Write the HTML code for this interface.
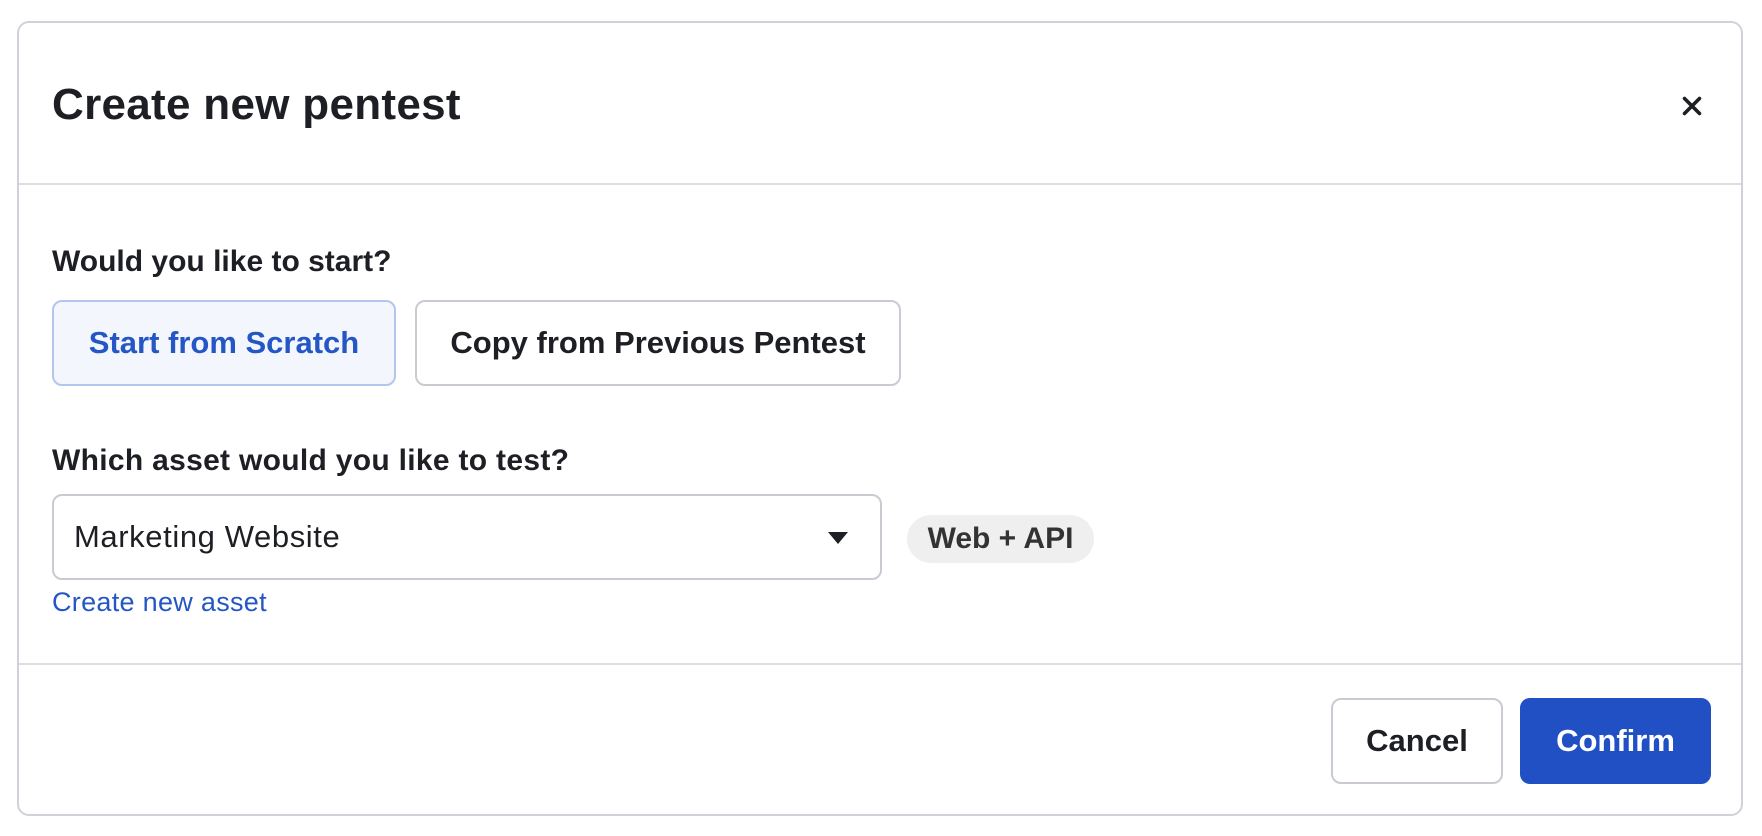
<!DOCTYPE html>
<html><head><style>
*{box-sizing:border-box;margin:0;padding:0}
body{width:1762px;height:836px;background:#fff;font-family:"Liberation Sans",sans-serif;position:relative;overflow:hidden;color:#1d1f24}
.modal{position:absolute;left:17px;top:21px;width:1726px;height:795px;border:2px solid #cfd2d8;border-radius:12px;background:#fff}
.abs{position:absolute}
h1{position:absolute;left:33px;top:57px;font-size:44px;font-weight:bold;line-height:50px;letter-spacing:0.3px}
.div{position:absolute;left:0;right:0;height:2px;background:#dcdee2}
.lbl{position:absolute;left:33px;font-size:30px;font-weight:bold;line-height:34px}
.btn{position:absolute;border-radius:10px;border:2px solid #c8cbd1;display:flex;align-items:center;justify-content:center;font-size:31px;font-weight:bold;background:#fff}
</style></head><body>
<div class="modal">
<h1>Create new pentest</h1>
<svg class="abs" style="left:1663px;top:73px" width="20" height="20" viewBox="0 0 20 20"><path d="M2.5 2.5L17.5 17.5M17.5 2.5L2.5 17.5" stroke="#1d1f24" stroke-width="3.6" stroke-linecap="round"/></svg>
<div class="div" style="top:160px"></div>
<div class="lbl" style="top:222px">Would you like to start?</div>
<div class="btn" style="left:33px;top:277px;width:344px;height:86px;background:#f3f6fd;border-color:#b3c6ef;color:#2457c5">Start from Scratch</div>
<div class="btn" style="left:396px;top:277px;width:486px;height:86px">Copy from Previous Pentest</div>
<div class="lbl" style="top:421px;letter-spacing:0.3px">Which asset would you like to test?</div>
<div class="btn" style="left:33px;top:471px;width:830px;height:86px;justify-content:flex-start;padding-left:20px;font-weight:normal;font-size:31px;letter-spacing:0.6px">Marketing Website</div>
<svg class="abs" style="left:808px;top:508px" width="22" height="14" viewBox="0 0 22 14"><path d="M1 1H21L11 13Z" fill="#1d1f24"/></svg>
<div class="abs" style="left:888px;top:492px;width:187px;height:48px;border-radius:24px;background:#efefef;font-size:30px;font-weight:bold;color:#333;display:flex;align-items:center;justify-content:center">Web + API</div>
<div class="abs" style="left:33px;top:564px;font-size:27px;color:#2457c5;letter-spacing:0.3px">Create new asset</div>
<div class="div" style="top:640px"></div>
<div class="btn" style="left:1312px;top:675px;width:172px;height:86px">Cancel</div>
<div class="btn" style="left:1501px;top:675px;width:191px;height:86px;background:#2150c4;border-color:#2150c4;color:#fff">Confirm</div>
</div>
</body></html>
